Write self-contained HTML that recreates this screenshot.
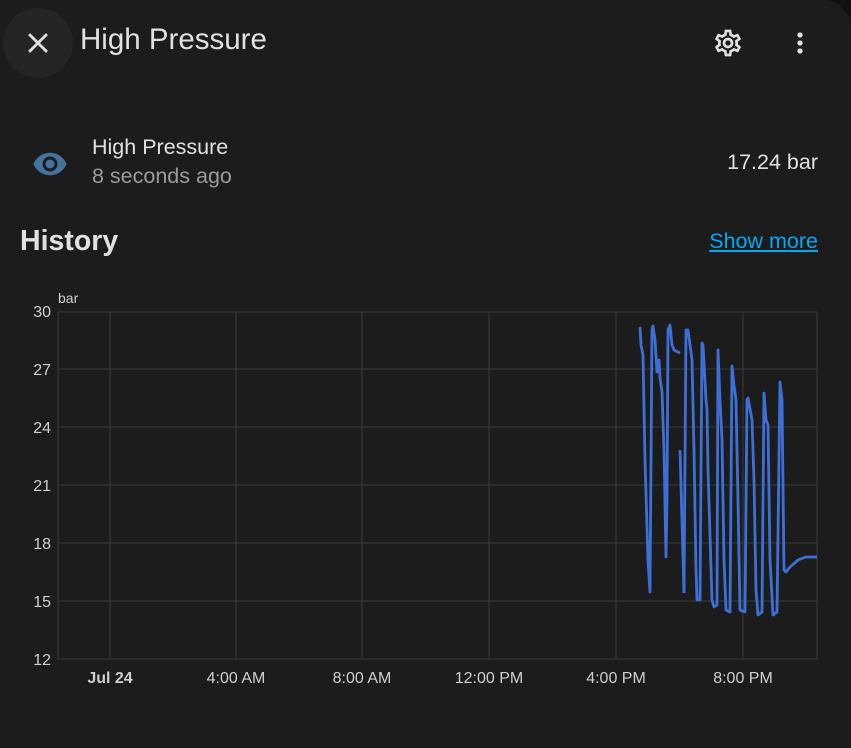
<!DOCTYPE html>
<html><head><meta charset="utf-8"><style>
html,body{margin:0;padding:0;background:#111;}
body{width:851px;height:748px;overflow:hidden;font-family:"Liberation Sans",sans-serif;}
.card{position:absolute;left:0;top:0;width:851px;height:748px;background:#1c1c1c;border-radius:0 28px 0 0;}
.t{position:absolute;white-space:nowrap;line-height:1;}
</style></head><body><div class="card">
<div style="position:absolute;left:3px;top:8px;width:70px;height:70px;border-radius:50%;background:#252525"></div>
<svg style="position:absolute;left:21px;top:26px" width="34" height="34" viewBox="0 0 24 24"><path d="M19,6.41L17.59,5L12,10.59L6.41,5L5,6.41L10.59,12L5,17.59L6.41,19L12,13.41L17.59,19L19,17.59L13.41,12L19,6.41Z" fill="#e1e1e1"/></svg>
<div class="t" style="left:80px;top:25px;font-size:29.5px;color:#e1e1e1">High Pressure</div>
<svg style="position:absolute;left:712px;top:27px" width="32" height="32" viewBox="0 0 24 24"><path fill="#e1e1e1" d="M12,8A4,4 0 0,1 16,12A4,4 0 0,1 12,16A4,4 0 0,1 8,12A4,4 0 0,1 12,8M12,10A2,2 0 0,0 10,12A2,2 0 0,0 12,14A2,2 0 0,0 14,12A2,2 0 0,0 12,10M10,22C9.750,22 9.54,21.82 9.5,21.58L9.13,18.93C8.5,18.68 7.96,18.34 7.44,17.94L4.95,18.95C4.73,19.03 4.46,18.95 4.34,18.73L2.34,15.27C2.21,15.05 2.27,14.78 2.46,14.63L4.57,12.97L4.5,12L4.57,11L2.46,9.37C2.27,9.22 2.21,8.95 2.34,8.73L4.34,5.27C4.46,5.05 4.73,4.96 4.95,5.05L7.44,6.05C7.96,5.66 8.5,5.32 9.13,5.07L9.5,2.42C9.54,2.18 9.75,2 10,2H14C14.25,2 14.46,2.18 14.5,2.42L14.87,5.07C15.5,5.32 16.04,5.66 16.56,6.05L19.05,5.05C19.27,4.96 19.54,5.05 19.66,5.27L21.66,8.73C21.79,8.95 21.73,9.22 21.54,9.37L19.43,11L19.5,12L19.43,13L21.54,14.63C21.73,14.78 21.79,15.05 21.66,15.27L19.66,18.73C19.54,18.95 19.27,19.04 19.05,18.95L16.56,17.95C16.04,18.340 15.5,18.68 14.87,18.93L14.5,21.58C14.46,21.82 14.25,22 14,22H10M11.25,4L10.88,6.61C9.68,6.86 8.62,7.5 7.85,8.39L5.44,7.35L4.69,8.65L6.8,10.2C6.4,11.37 6.4,12.64 6.8,13.8L4.68,15.36L5.43,16.66L7.86,15.62C8.63,16.5 9.68,17.14 10.87,17.38L11.24,20H12.76L13.13,17.39C14.32,17.14 15.37,16.5 16.14,15.62L18.57,16.66L19.32,15.36L17.2,13.81C17.6,12.64 17.6,11.37 17.2,10.2L19.31,8.65L18.56,7.35L16.15,8.39C15.38,7.5 14.32,6.86 13.12,6.62L12.75,4H11.25Z"/></svg>
<svg style="position:absolute;left:784px;top:27px" width="32" height="32" viewBox="0 0 24 24"><path fill="#e1e1e1" d="M12,16A2,2 0 0,1 14,18A2,2 0 0,1 12,20A2,2 0 0,1 10,18A2,2 0 0,1 12,16M12,10A2,2 0 0,1 14,12A2,2 0 0,1 12,14A2,2 0 0,1 10,12A2,2 0 0,1 12,10M12,4A2,2 0 0,1 14,6A2,2 0 0,1 12,8A2,2 0 0,1 10,6A2,2 0 0,1 12,4Z"/></svg>
<svg style="position:absolute;left:32px;top:146px" width="36" height="36" viewBox="0 0 24 24"><path fill="#44739e" d="M12,9A3,3 0 0,0 9,12A3,3 0 0,0 12,15A3,3 0 0,0 15,12A3,3 0 0,0 12,9M12,17A5,5 0 0,1 7,12A5,5 0 0,1 12,7A5,5 0 0,1 17,12A5,5 0 0,1 12,17M12,4.5C7,4.5 2.73,7.61 1,12C2.73,16.39 7,19.5 12,19.5C17,19.5 21.27,16.39 23,12C21.27,7.61 17,4.5 12,4.5Z"/></svg>
<div class="t" style="left:92px;top:137px;font-size:21.5px;color:#e1e1e1">High Pressure</div>
<div class="t" style="left:92px;top:166px;font-size:21.5px;color:#9b9b9b">8 seconds ago</div>
<div class="t" style="right:33px;top:152px;font-size:21.5px;color:#e1e1e1">17.24 bar</div>
<div class="t" style="left:20px;top:227px;font-size:28.5px;font-weight:bold;color:#e1e1e1">History</div>
<div class="t" style="right:33px;top:231px;font-size:21.5px;color:#03a9f4;text-decoration:underline">Show more</div>
<svg style="position:absolute;left:0;top:0" width="851" height="748">
<g stroke="#3a3a3a" stroke-width="1">
<line x1="58" y1="312" x2="817" y2="312"/><line x1="58" y1="369" x2="817" y2="369"/><line x1="58" y1="427" x2="817" y2="427"/><line x1="58" y1="485" x2="817" y2="485"/><line x1="58" y1="543" x2="817" y2="543"/><line x1="58" y1="601" x2="817" y2="601"/><line x1="58" y1="659" x2="817" y2="659"/>
<line x1="58" y1="312" x2="58" y2="659"/><line x1="110" y1="312" x2="110" y2="659"/><line x1="236" y1="312" x2="236" y2="659"/><line x1="362" y1="312" x2="362" y2="659"/><line x1="489" y1="312" x2="489" y2="659"/><line x1="616" y1="312" x2="616" y2="659"/><line x1="743" y1="312" x2="743" y2="659"/><line x1="817" y1="312" x2="817" y2="659"/>
</g>
<g font-family="Liberation Sans" font-size="16" fill="#cfcfcf" text-anchor="end">
<text x="51" y="317">30</text><text x="51" y="375">27</text><text x="51" y="433">24</text><text x="51" y="491">21</text><text x="51" y="549">18</text><text x="51" y="607">15</text><text x="51" y="665">12</text>
</g>
<text x="58" y="303" font-family="Liberation Sans" font-size="14" fill="#cfcfcf">bar</text>
<g font-family="Liberation Sans" font-size="16" fill="#cfcfcf" text-anchor="middle">
<text x="110" y="683" font-weight="bold">Jul 24</text><text x="236" y="683">4:00 AM</text><text x="362" y="683">8:00 AM</text><text x="489" y="683">12:00 PM</text><text x="616" y="683">4:00 PM</text><text x="743" y="683">8:00 PM</text>
</g>
<g fill="none" stroke="#3e6fd8" stroke-width="2.8" stroke-linejoin="round">
<path d="M640,327 L641,345 L643,355 L645,460 L648,560 L650,592 L652,330 L653,326 L655,340 L657,372 L659,360 L660,378 L662,392 L664,450 L666,557 L667,500 L668,330 L670,325 L672,345 L674,350 L680,353"/>
<path d="M680,450 L682,520 L684,593"/>
<path d="M684,593 L686,330 L688,330 L692,360 L694,450 L696,570 L697,600 L700,600 L702,343 L703,345 L706,400 L707,410 L708,470 L712,600 L714,607 L717,605 L718,350 L720,400 L722,440 L724,560 L726,610 L730,612 L732,366 L734,385 L736,400 L738,500 L740,610 L745,612 L747,400 L748,398 L752,420 L754,480 L756,590 L758,615 L762,612 L764,393 L766,420 L768,425 L770,560 L773,615 L777,612 L780,382 L782,400 L784,570 L786,572 L790,567 L798,560 L806,557 L817,557"/>
</g>
</svg>
</div></body></html>
